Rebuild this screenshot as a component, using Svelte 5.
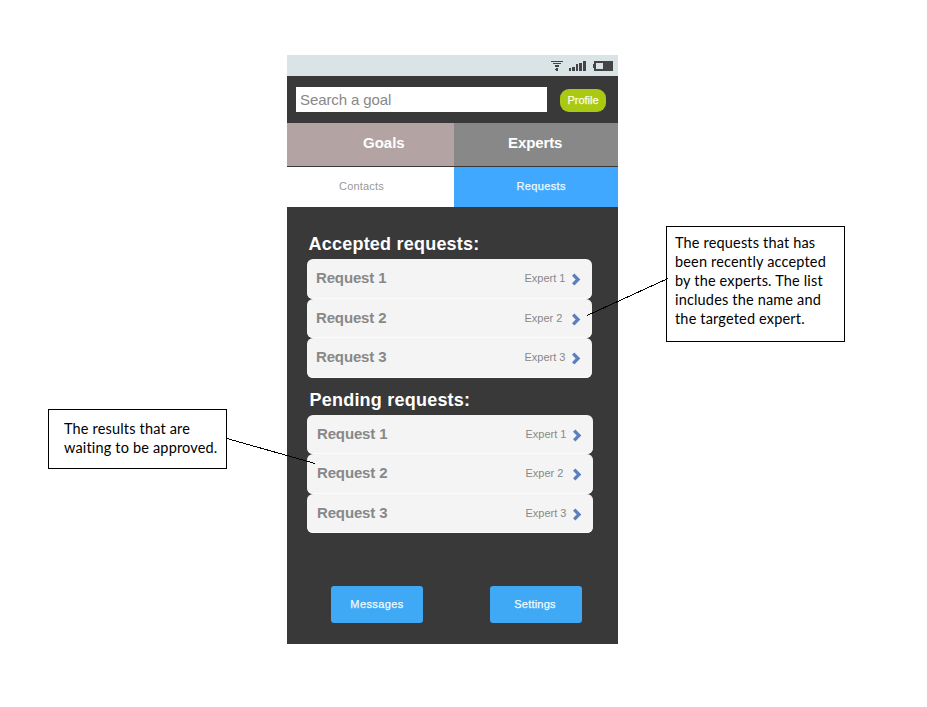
<script>
  const groups = [
    {
      title: 'Accepted requests:',
      cls: 'accepted',
      rows: [
        { name: 'Request 1', expert: 'Expert 1' },
        { name: 'Request 2', expert: 'Exper 2' },
        { name: 'Request 3', expert: 'Expert 3' }
      ]
    },
    {
      title: 'Pending requests:',
      cls: 'pending',
      rows: [
        { name: 'Request 1', expert: 'Expert 1' },
        { name: 'Request 2', expert: 'Exper 2' },
        { name: 'Request 3', expert: 'Expert 3' }
      ]
    }
  ];
</script>

<div class="page">
  <aside class="note left">
    <div>The results that are</div>
    <div>waiting to be approved.</div>
  </aside>

  <main class="phone">
    <div class="status">
      <svg width="64" height="12" viewBox="0 0 64 12" fill="#444" shape-rendering="crispEdges">
        <path d="M0 0h12v1H0zM2 2h8v1H2zM4 4h4v2H4zM5 7h2v1H5zM4 8h3v1H4zM5 9h2v1H5z" />
        <path d="M18 7h2v3h-2zM21 6h3v4h-3zM25 3h2v7h-2zM28 2h3v8h-3zM32 0h3v10h-3z" />
        <path fill-rule="evenodd" d="M43 0h19v10H43V7h-1V3h1zM45 2v6h7V2z" />
      </svg>
    </div>
    <div class="searchbar">
      <div class="search"><span>Search a goal</span></div>
      <div class="profile">Profile</div>
    </div>
    <nav class="tabs">
      <div class="goals"><span>Goals</span></div>
      <div class="experts"><span>Experts</span></div>
    </nav>
    <nav class="subtabs">
      <div class="contacts"><span>Contacts</span></div>
      <div class="requests"><span>Requests</span></div>
    </nav>
    {#each groups as g}
      <section class={g.cls}>
        <h2>{g.title}</h2>
        <ul>
          {#each g.rows as r}
            <li>
              <b>{r.name}</b>
              <span class="expert">{r.expert}</span>
              <svg width="10" height="14" viewBox="0 0 10 14">
                <path d="M2.2 1.6 7 6.5 2.2 11.4" fill="none" stroke="#5b80bd" stroke-width="3.3" />
              </svg>
            </li>
          {/each}
        </ul>
      </section>
    {/each}
    <div class="actions">
      <div class="button">Messages</div>
      <div class="button">Settings</div>
    </div>
  </main>

  <aside class="note right">
    <div>The requests that has</div>
    <div>been recently accepted</div>
    <div>by the experts. The list</div>
    <div>includes the name and</div>
    <div>the targeted expert.</div>
  </aside>

  <svg class="leaders" width="927" height="707" shape-rendering="crispEdges">
    <path d="M587 315.5 668 278.5M227 438.5 315 463.5" stroke="#000" fill="none" />
  </svg>
</div>

<style>
  :global(body) { margin: 0; background: #fff; }
  .page {
    position: relative;
    width: 927px;
    height: 707px;
    box-sizing: border-box;
    padding: 55px 0 0 48px;
    display: flex;
    align-items: flex-start;
    overflow: hidden;
    font-family: "Liberation Sans", Arial, sans-serif;
  }
  .note {
    box-sizing: border-box;
    width: 179px;
    border: 1px solid #000;
    background: #fff;
    font: 14.5px/19px Lato, "Open Sans", sans-serif;
    letter-spacing: .17px;
    font-variant-ligatures: none;
    color: #000;
    white-space: nowrap;
    flex: none;
  }
  .left { height: 60px; margin: 354px 60px 0 0; padding: 9px 0 0 15px; }
  .right { height: 116px; margin: 171px 0 0 48px; padding: 6px 0 0 8px; }
  .phone {
    width: 331px;
    height: 589px;
    background: #393939;
    flex: none;
    display: flex;
    flex-direction: column;
  }
  .status {
    height: 21px;
    background: #dae3e6;
    display: flex;
    justify-content: flex-end;
    padding: 6px 3px 0 0;
    box-sizing: border-box;
  }
  .searchbar {
    height: 47px;
    display: flex;
    align-items: flex-start;
    padding: 11px 12px 0 9px;
    box-sizing: border-box;
    justify-content: space-between;
  }
  .search {
    width: 251px;
    height: 25px;
    box-sizing: border-box;
    padding-left: 4px;
    background: #fff;
    font-size: 15px;
    line-height: 26px;
    letter-spacing: -.1px;
    color: #888;
  }
  .profile {
    width: 46px;
    height: 23px;
    margin-top: 2px;
    border-radius: 9px;
    background: #a9c912;
    color: #fdffe0;
    font-size: 11px;
    line-height: 23px;
    text-align: center;
    -webkit-text-stroke: .25px;
  }
  .tabs, .subtabs { display: grid; grid-template-columns: 167px 164px; }
  .tabs { height: 43px; margin-bottom: 1px; color: #fff; font-weight: bold; font-size: 15px; line-height: 40px; }
  .subtabs { height: 40px; font-size: 11px; line-height: 39px; }
  .goals { background: #b3a3a2; padding-left: 76px; }
  .experts { background: #888; padding-left: 54px; }
  .experts span { letter-spacing: -.1px; }
  .contacts { background: #fff; color: #999; padding-left: 52px; letter-spacing: .2px; }
  .requests { background: #40a9ff; color: #eff9ff; padding-left: 62.5px; letter-spacing: .35px; -webkit-text-stroke: .25px; }
  section { padding-left: 20px; }
  .accepted { margin-top: 26px; }
  .pending { margin-top: 11px; }
  h2 { margin: 0; font-size: 18px; line-height: 22px; height: 26px; color: #fff; padding-left: 1.5px; white-space: nowrap; letter-spacing: .22px; }
  .pending h2 { padding-left: 2.5px; }
  ul { list-style: none; margin: 0; padding: 0; width: 285px; }
  .pending ul { width: 286px; }
  li {
    height: 39px;
    box-sizing: border-box;
    background: #f4f4f4;
    border-radius: 6px;
    display: grid;
    grid-template-columns: 208px 47px 10px;
    padding-left: 9px;
    line-height: 38px;
    box-shadow: inset 0 -1px #fbfbfb;
  }
  .accepted li:first-child, .pending li:nth-child(2), .accepted li:last-child { height: 40px; }
  .pending li { padding-left: 10px; }
  li b { font-size: 15px; color: #888; letter-spacing: -.15px; }
  .expert { font-size: 11px; color: #888; white-space: nowrap; padding-left: .5px; }
  li svg { margin-top: 14px; }
  .actions { margin-top: 53px; display: flex; gap: 67px; padding-left: 44px; }
  .button {
    width: 92px;
    height: 37px;
    border-radius: 3px;
    background: #40a9f5;
    color: #effaff;
    font-size: 11px;
    line-height: 37px;
    text-align: center;
    letter-spacing: .4px;
    -webkit-text-stroke: .25px;
  }
  .button:last-child { letter-spacing: .2px; padding-right: 2px; width: 90px; }
  .leaders { position: absolute; left: 0; top: 0; pointer-events: none; }
</style>
